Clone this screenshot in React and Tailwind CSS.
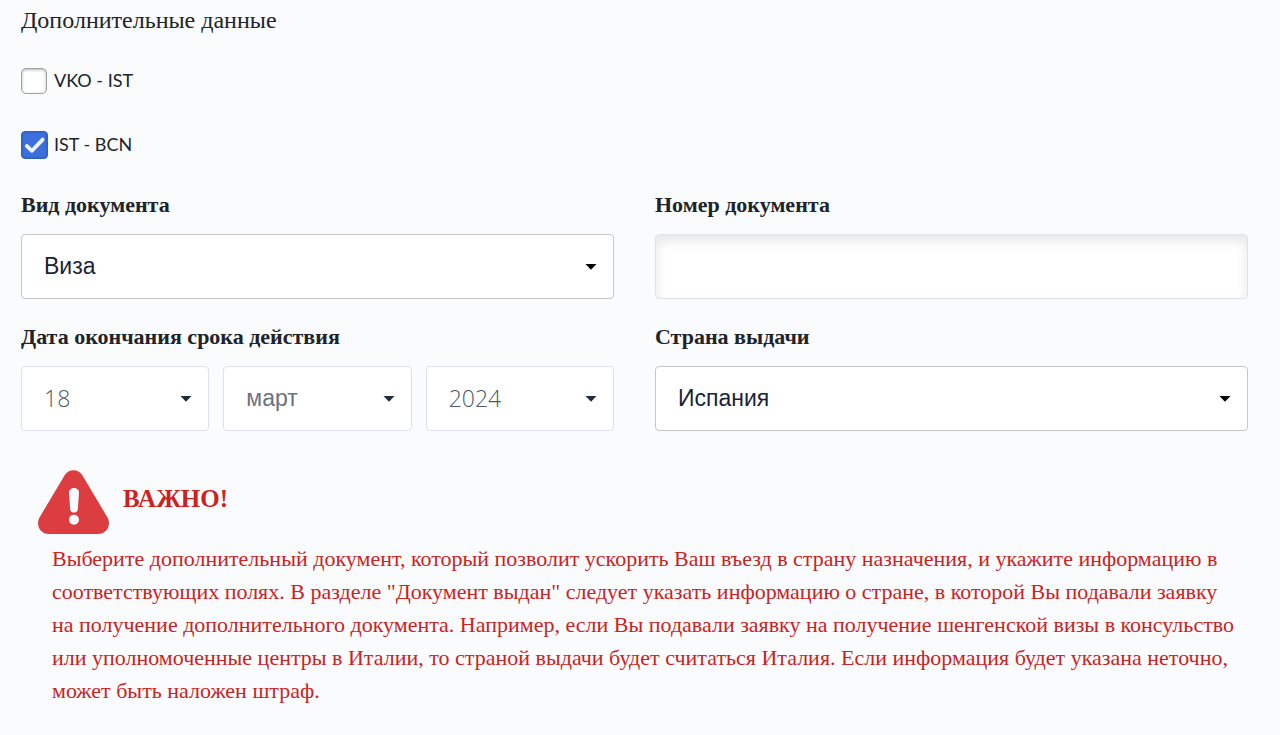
import { useState } from "react";

const Checkbox = ({ label, checked, onChange }) => {
  return (
    <label className="flex h-7 w-fit cursor-pointer items-center">
      <input
        type="checkbox"
        checked={checked}
        onChange={(e) => onChange(e.target.checked)}
        className="peer sr-only"
      />
      <span className="flex w-[33px] peer-checked:hidden">
        <span className="h-[26px] w-[26px] rounded-[5px] border border-[#a0a0a0] bg-white shadow-[inset_0_1px_3px_rgba(0,0,0,0.3)]" />
      </span>
      <span className="hidden w-[33px] peer-checked:flex">
        <span className="flex h-7 w-[27px] items-center justify-center rounded-[4px] border border-[#2f62bd] bg-[#3a6fdd] shadow-[inset_0_0_2px_#2350a0]">
          <svg viewBox="0 0 24 24" className="h-6 w-6" fill="none" stroke="#eef3fd" strokeWidth="3.8" strokeLinecap="round" strokeLinejoin="round">
            <path d="M3.8 13 9 17.8 19.6 6.6" />
          </svg>
        </span>
      </span>
      <span className="pb-0.5 font-['Lato',sans-serif] text-[18px] leading-6 text-[#202328]">{label}</span>
    </label>
  );
};

const variants = {
  normal: "border-[#c6c6c6] font-['Liberation_Sans',Arial,sans-serif] text-[#1c2333]",
  muted: "border-[#dfe1e8] font-['Liberation_Sans',Arial,sans-serif] text-[#6b737c]",
  mutedNumber: "border-[#dfe1e8] font-['Open_Sans',sans-serif] font-light text-[#4f5862]",
};

const Select = ({ variant = "normal", options, ...props }) => {
  return (
    <div className="relative min-w-0 flex-1">
      <select
        {...props}
        className={`block h-[65px] w-full appearance-none rounded-[4px] border bg-white pr-12 pl-[22px] text-[23px] ${variants[variant]}`}
      >
        {options.map((option) => (
          <option key={option}>{option}</option>
        ))}
      </select>
      <svg
        viewBox="0 0 12 6"
        className={`pointer-events-none absolute top-[30px] right-[17px] h-1.5 w-3 ${variant === "normal" ? "fill-black" : "fill-[#242b39]"}`}
      >
        <path d="M0.5 0h11L6 5.8z" />
      </svg>
    </div>
  );
};

const labelClass = "mb-[13px] block text-[22px] leading-8 font-bold text-[#202328]";

export default function App() {
  const [firstLeg, setFirstLeg] = useState(false);
  const [secondLeg, setSecondLeg] = useState(true);

  return (
    <main className="min-h-screen bg-[#fafbfd] pt-1 pr-8 pb-6 pl-[21px] font-['Liberation_Serif','Times_New_Roman',serif]">
      <h1 className="text-[24px] leading-8 text-[#202328]">Дополнительные данные</h1>

      <div className="mt-[31px] flex flex-col gap-9">
        <Checkbox label="VKO - IST" checked={firstLeg} onChange={setFirstLeg} />
        <Checkbox label="IST - BCN" checked={secondLeg} onChange={setSecondLeg} />
      </div>

      <form className="mt-[30px] grid grid-cols-2 gap-x-[41px] gap-y-[22px]">
        <div>
          <label htmlFor="docType" className={labelClass}>Вид документа</label>
          <div className="flex">
            <Select id="docType" options={["Виза"]} />
          </div>
        </div>
        <div>
          <label htmlFor="docNumber" className={labelClass}>Номер документа</label>
          <input
            id="docNumber"
            type="text"
            className="block h-[65px] w-full rounded-[4px] border border-[#dfe3e8] bg-white px-[22px] font-['Liberation_Sans',Arial,sans-serif] text-[23px] shadow-[inset_0_6px_12px_rgba(0,0,0,0.1)]"
          />
        </div>
        <div>
          <label htmlFor="expiryDay" className={labelClass}>Дата окончания срока действия</label>
          <div className="flex gap-3.5">
            <Select id="expiryDay" variant="mutedNumber" options={["18"]} />
            <Select aria-label="Месяц" variant="muted" options={["март"]} />
            <Select aria-label="Год" variant="mutedNumber" options={["2024"]} />
          </div>
        </div>
        <div>
          <label htmlFor="country" className={labelClass}>Страна выдачи</label>
          <div className="flex">
            <Select id="country" options={["Испания"]} />
          </div>
        </div>
      </form>

      <section className="mt-[39px] text-[#cc2222]">
        <div className="flex items-start gap-3.5 pl-[17px]">
          <svg viewBox="0 0 71 64" className="h-16 w-[71px]">
            <path
              d="M26.5 5.5C30.5-1.5 40.5-1.5 44.5 5.5L69.5 47.5C73.5 55 69 64 60 64H11C2 64-2.5 55 1.5 47.5Z"
              fill="#dc3d40"
            />
            <path d="M31 22.5C31 16.5 41 16.5 41 22.5L39.8 39.5C39.5 43.6 32.5 43.6 32.2 39.5Z" fill="#fafbfd" />
            <circle cx="36" cy="49.8" r="5" fill="#fafbfd" />
          </svg>
          <h2 className="mt-[13px] text-[25px] leading-8 font-bold">ВАЖНО!</h2>
        </div>
        <p className="mt-2 pr-2 pl-[31px] text-[22px] leading-[33px]">
          Выберите дополнительный документ, который позволит ускорить Ваш въезд в страну назначения, и укажите
          информацию в соответствующих полях. В разделе "Документ выдан" следует указать информацию о стране, в
          которой Вы подавали заявку на получение дополнительного документа. Например, если Вы подавали заявку на
          получение шенгенской визы в консульство или уполномоченные центры в Италии, то страной выдачи будет
          считаться Италия. Если информация будет указана неточно, может быть наложен штраф.
        </p>
      </section>
    </main>
  );
}
